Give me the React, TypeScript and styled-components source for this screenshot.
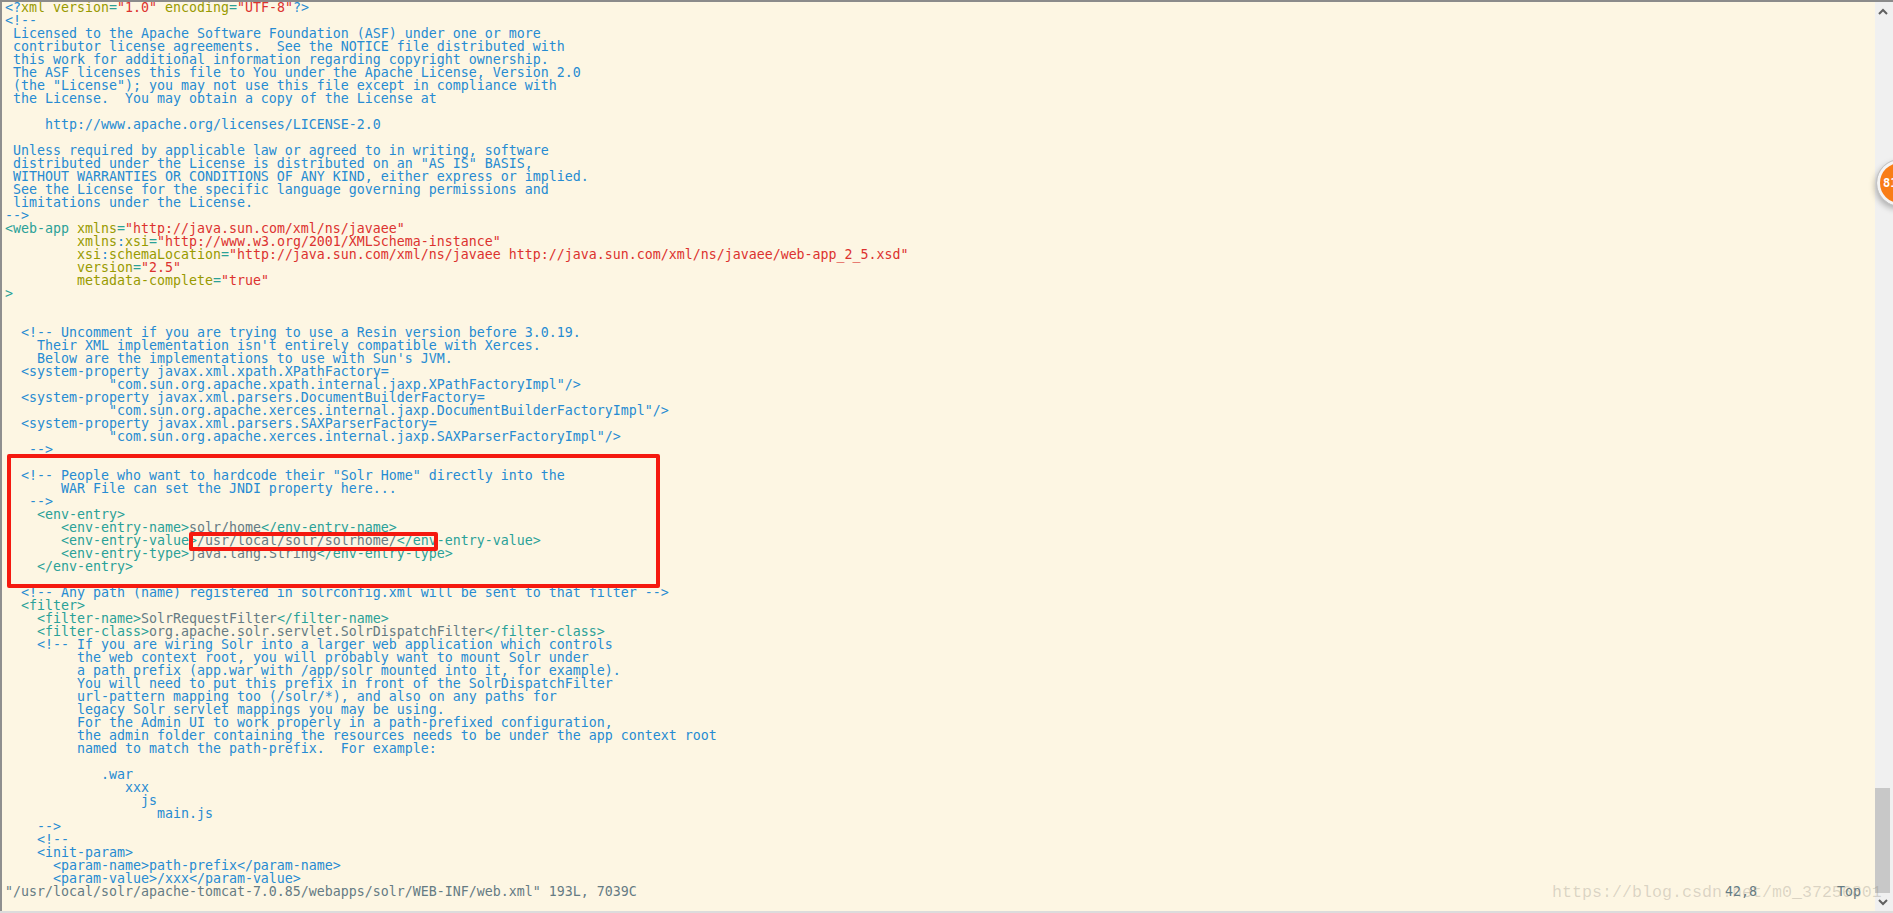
import styled, { createGlobalStyle } from "styled-components";

type Tone = "comment" | "tag" | "attr" | "value" | "eq" | "plain";
type Part = [Tone, string];

const tones: Record<Tone, string> = {
  comment: "#268bd2",
  tag: "#2aa198",
  attr: "#989a00",
  value: "#dc322f",
  eq: "#2aa198",
  plain: "#657b83",
};

// comment text, all one colour
const c = (text: string): Part[] => [["comment", text]];

// tags in cyan, whatever sits between them in the plain colour
const x = (text: string): Part[] =>
  text
    .split(/(<\/?[\w-]+>)/)
    .filter(Boolean)
    .map((s): Part => (s.startsWith("<") ? ["tag", s] : ["plain", s]));

const attr = (pad: string, name: string, value: string): Part[] => [
  ["attr", pad + name],
  ["eq", "="],
  ["value", `"${value}"`],
];

const lines: Part[][] = [
  [
    ["comment", "<?"],
    ["attr", "xml version"],
    ["eq", "="],
    ["value", '"1.0"'],
    ["attr", " encoding"],
    ["eq", "="],
    ["value", '"UTF-8"'],
    ["comment", "?>"],
  ],
  c("<!--"),
  c(" Licensed to the Apache Software Foundation (ASF) under one or more"),
  c(" contributor license agreements.  See the NOTICE file distributed with"),
  c(" this work for additional information regarding copyright ownership."),
  c(" The ASF licenses this file to You under the Apache License, Version 2.0"),
  c(' (the "License"); you may not use this file except in compliance with'),
  c(" the License.  You may obtain a copy of the License at"),
  [],
  c("     http://www.apache.org/licenses/LICENSE-2.0"),
  [],
  c(" Unless required by applicable law or agreed to in writing, software"),
  c(' distributed under the License is distributed on an "AS IS" BASIS,'),
  c(" WITHOUT WARRANTIES OR CONDITIONS OF ANY KIND, either express or implied."),
  c(" See the License for the specific language governing permissions and"),
  c(" limitations under the License."),
  c("-->"),
  [["tag", "<web-app"], ...attr(" ", "xmlns", "http://java.sun.com/xml/ns/javaee")],
  [
    ["attr", "         xmlns"],
    ["comment", ":"],
    ["attr", "xsi"],
    ["eq", "="],
    ["value", '"http://www.w3.org/2001/XMLSchema-instance"'],
  ],
  [
    ["attr", "         xsi"],
    ["comment", ":"],
    ["attr", "schemaLocation"],
    ["eq", "="],
    ["value", '"http://java.sun.com/xml/ns/javaee http://java.sun.com/xml/ns/javaee/web-app_2_5.xsd"'],
  ],
  attr("         ", "version", "2.5"),
  attr("         ", "metadata-complete", "true"),
  [["tag", ">"]],
  [],
  [],
  c("  <!-- Uncomment if you are trying to use a Resin version before 3.0.19."),
  c("    Their XML implementation isn't entirely compatible with Xerces."),
  c("    Below are the implementations to use with Sun's JVM."),
  c("  <system-property javax.xml.xpath.XPathFactory="),
  c('             "com.sun.org.apache.xpath.internal.jaxp.XPathFactoryImpl"/>'),
  c("  <system-property javax.xml.parsers.DocumentBuilderFactory="),
  c('             "com.sun.org.apache.xerces.internal.jaxp.DocumentBuilderFactoryImpl"/>'),
  c("  <system-property javax.xml.parsers.SAXParserFactory="),
  c('             "com.sun.org.apache.xerces.internal.jaxp.SAXParserFactoryImpl"/>'),
  c("   -->"),
  [],
  c('  <!-- People who want to hardcode their "Solr Home" directly into the'),
  c("       WAR File can set the JNDI property here..."),
  c("   -->"),
  x("    <env-entry>"),
  x("       <env-entry-name>solr/home</env-entry-name>"),
  x("       <env-entry-value>/usr/local/solr/solrhome/</env-entry-value>"),
  x("       <env-entry-type>java.lang.String</env-entry-type>"),
  x("    </env-entry>"),
  [],
  c("  <!-- Any path (name) registered in solrconfig.xml will be sent to that filter -->"),
  x("  <filter>"),
  x("    <filter-name>SolrRequestFilter</filter-name>"),
  x("    <filter-class>org.apache.solr.servlet.SolrDispatchFilter</filter-class>"),
  c("    <!-- If you are wiring Solr into a larger web application which controls"),
  c("         the web context root, you will probably want to mount Solr under"),
  c("         a path prefix (app.war with /app/solr mounted into it, for example)."),
  c("         You will need to put this prefix in front of the SolrDispatchFilter"),
  c("         url-pattern mapping too (/solr/*), and also on any paths for"),
  c("         legacy Solr servlet mappings you may be using."),
  c("         For the Admin UI to work properly in a path-prefixed configuration,"),
  c("         the admin folder containing the resources needs to be under the app context root"),
  c("         named to match the path-prefix.  For example:"),
  [],
  c("            .war"),
  c("               xxx"),
  c("                 js"),
  c("                   main.js"),
  c("    -->"),
  c("    <!--"),
  c("    <init-param>"),
  c("      <param-name>path-prefix</param-name>"),
  c("      <param-value>/xxx</param-value>"),
];

const GlobalStyle = createGlobalStyle`
  html, body {
    margin: 0;
    height: 100%;
    overflow: hidden;
    background: #fdf6e3;
  }
`;

const Screen = styled.div`
  position: relative;
  display: flex;
  width: 1893px;
  height: 913px;
  box-sizing: border-box;
  border-top: 2px solid #8b8b8b;
  border-bottom: 2px solid #dcdcdc;
  overflow: hidden;
`;

const Editor = styled.div`
  flex: 1;
  box-sizing: border-box;
  padding-left: 3px;
  border-left: 2px solid #8f8f8f;
  background: #fdf6e3;
  font-family: "DejaVu Sans Mono", "Liberation Mono", monospace;
  font-size: 13.29px;
  line-height: 11px;
`;

const Row = styled.div`
  height: 13px;
  white-space: pre;
`;

const Token = styled.span<{ $tone: Tone }>`
  color: ${(p) => tones[p.$tone]};
`;

const StatusLine = styled.div`
  display: flex;
  height: 13px;
  white-space: pre;
  color: #657b83;
`;

const StatusPath = styled.span`
  width: 1720px;
  flex: none;
`;

const StatusCursor = styled.span`
  width: 112px;
  flex: none;
`;

const Scrollbar = styled.div`
  width: 18px;
  flex: none;
  display: flex;
  flex-direction: column;
  background: #f0f0f0;
`;

const ScrollArrow = styled.div`
  height: 18px;
  display: flex;
  align-items: center;
  justify-content: center;
  padding-right: 2px;
  box-sizing: border-box;
  color: #606060;
`;

const ScrollTrack = styled.div`
  flex: 1;
  display: flex;
  flex-direction: column;
  justify-content: flex-end;
`;

const ScrollThumb = styled.div`
  width: 15px;
  height: 105px;
  background: #c8c8c8;
`;

const RedBox = styled.div<{ $left: number; $top: number; $width: number; $height: number }>`
  position: absolute;
  box-sizing: border-box;
  left: ${(p) => p.$left}px;
  top: ${(p) => p.$top}px;
  width: ${(p) => p.$width}px;
  height: ${(p) => p.$height}px;
  border: 4px solid #f5190f;
  border-radius: 2px;
`;

const Badge = styled.div`
  position: absolute;
  left: 1877px;
  top: 158px;
  width: 46px;
  height: 46px;
  box-sizing: border-box;
  border-radius: 50%;
  border: 3px solid #f4f4f4;
  outline: 1px solid #c4c4c4;
  box-shadow: -2px 3px 6px rgba(0, 0, 0, 0.28);
  background: #f97d16;
  color: #fff;
  font-family: "DejaVu Sans Mono", monospace;
  font-weight: 700;
  font-size: 12px;
  line-height: 40px;
  padding-left: 3px;
`;

const Watermark = styled.div`
  position: absolute;
  left: 1552px;
  top: 881px;
  font-family: "Liberation Mono", "DejaVu Serif", monospace;
  font-size: 16.67px;
  line-height: 20px;
  white-space: pre;
  color: rgba(130, 125, 115, 0.28);
  pointer-events: none;
`;

function Chevron({ up }: { up?: boolean }) {
  return (
    <svg width="10" height="7" viewBox="0 0 10 7" fill="none">
      <path
        d={up ? "M1 6L5 2L9 6" : "M1 1L5 5L9 1"}
        stroke="currentColor"
        strokeWidth="2"
      />
    </svg>
  );
}

export default function App() {
  return (
    <Screen>
      <GlobalStyle />
      <Editor>
        {lines.map((parts, i) => (
          <Row key={i}>
            {parts.map(([tone, text], j) => (
              <Token key={j} $tone={tone}>
                {text}
              </Token>
            ))}
          </Row>
        ))}
        <StatusLine>
          <StatusPath>"/usr/local/solr/apache-tomcat-7.0.85/webapps/solr/WEB-INF/web.xml" 193L, 7039C</StatusPath>
          <StatusCursor>42,8</StatusCursor>
          <span>Top</span>
        </StatusLine>
      </Editor>
      <Scrollbar>
        <ScrollArrow>
          <Chevron up />
        </ScrollArrow>
        <ScrollTrack>
          <ScrollThumb />
        </ScrollTrack>
        <ScrollArrow>
          <Chevron />
        </ScrollArrow>
      </Scrollbar>
      <RedBox $left={7} $top={452} $width={653} $height={134} />
      <RedBox $left={189} $top={530} $width={249} $height={19} />
      <Badge>81</Badge>
      <Watermark>https://blog.csdn.net/m0_37256801</Watermark>
    </Screen>
  );
}
